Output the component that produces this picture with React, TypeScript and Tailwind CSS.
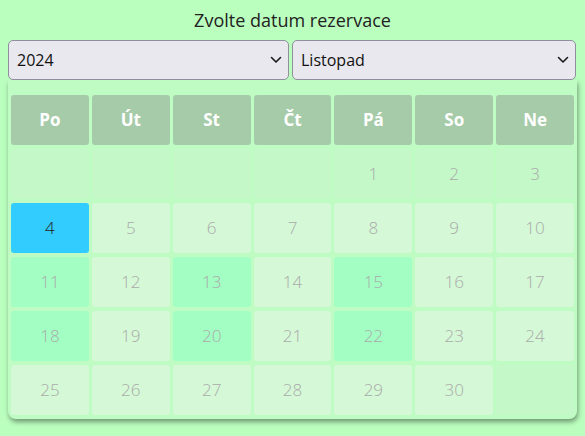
import React, { useState } from 'react';

const dayNames = ['Po', 'Út', 'St', 'Čt', 'Pá', 'So', 'Ne'];
const highlighted = [11, 13, 15, 18, 20, 22];

function Chevron() {
  return (
    <svg width="12" height="8" viewBox="0 0 12 8" className="absolute right-[7px] top-[16px] pointer-events-none">
      <path d="M1.5 1.5 L6 6 L10.5 1.5" fill="none" stroke="#1a1a1a" strokeWidth="1.6" strokeLinecap="round" strokeLinejoin="round" />
    </svg>
  );
}

function App() {
  const [year, setYear] = useState('2024');
  const [month, setMonth] = useState('Listopad');
  const [selected, setSelected] = useState(4);

  // listopad 2024 zacina v patek
  const cells: (number | null)[] = [null, null, null, null];
  for (let d = 1; d <= 30; d++) cells.push(d);
  while (cells.length % 7 !== 0) cells.push(null);

  const cellClass = (d: number | null, idx: number) => {
    if (d === null || idx < 7) return 'bg-[#c4f8c8] text-[#aaaaaa]';
    if (d === selected) return 'bg-[#33ccff] text-[#222222]';
    if (highlighted.includes(d)) return 'bg-[#a2fec3] text-[#aaaaaa]';
    return 'bg-[#d5f8d6] text-[#aaaaaa]';
  };

  return (
    <div className="min-h-screen bg-[#bbffbf] font-['Open_Sans',sans-serif] text-[#222]">
      <h1 className="text-center text-[18px] leading-[24px] pt-[8px] pb-[8px] text-[#222]">
        Zvolte datum rezervace
      </h1>
      <div className="mx-[8px] w-[569px]">
        <div className="grid grid-cols-[281px_1fr] gap-[3px] pr-[1px]">
          <div className="relative">
            <select
              value={year}
              onChange={e => setYear(e.target.value)}
              className="appearance-none w-full h-[40px] rounded-[5px] border border-[#8f8f9d] bg-[#e9e8ee] pl-[8px] text-[16px] text-[#111] outline-none"
            >
              <option>2024</option>
              <option>2025</option>
            </select>
            <Chevron />
          </div>
          <div className="relative">
            <select
              value={month}
              onChange={e => setMonth(e.target.value)}
              className="appearance-none w-full h-[40px] rounded-[5px] border border-[#8f8f9d] bg-[#e9e8ee] pl-[8px] text-[16px] text-[#111] outline-none"
            >
              <option>Listopad</option>
              <option>Prosinec</option>
            </select>
            <Chevron />
          </div>
        </div>
        <div className="bg-[#bffcc3] rounded-b-[8px] shadow-[1px_3px_5px_rgba(0,0,0,0.4)] px-[3px] pt-[15px] pb-[4px]">
          <div className="grid grid-cols-7 gap-x-[3px] gap-y-[4px]">
            {dayNames.map(n => (
              <div
                key={n}
                className="h-[50px] rounded-[3px] bg-[#a6cba9] text-white font-bold text-[17px] flex items-center justify-center"
              >
                {n}
              </div>
            ))}
            {cells.map((d, i) => (
              <div
                key={i}
                onClick={() => d && setSelected(d)}
                className={`h-[50px] rounded-[3px] flex items-center justify-center text-[17px] font-light ${cellClass(d, i)}`}
              >
                {d ?? ''}
              </div>
            ))}
          </div>
        </div>
      </div>
    </div>
  );
}

export default App;
